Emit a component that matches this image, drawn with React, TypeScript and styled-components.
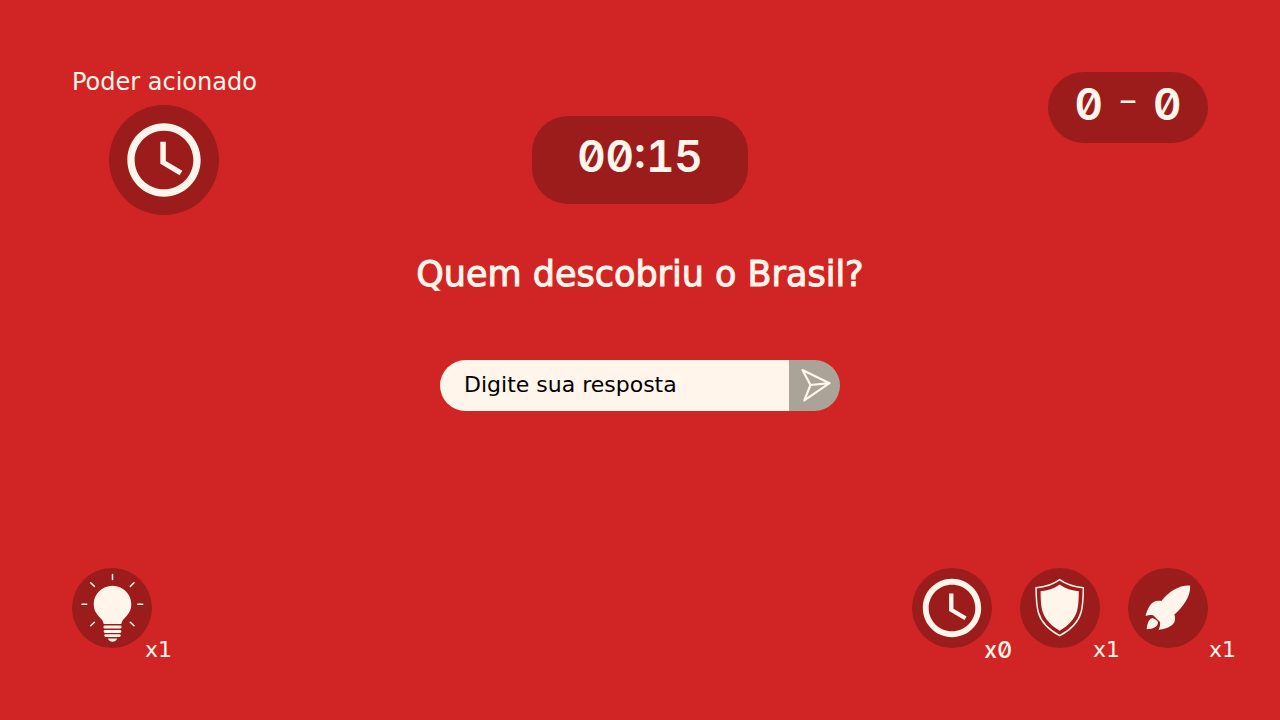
import React, { useState } from "react";
import styled, { createGlobalStyle } from "styled-components";

const colors = {
  red: "#d12525",
  dark: "#9c1c1c",
  cream: "#fff5ea",
  gray: "#a9a398",
};

const GlobalStyle = createGlobalStyle`
  * { box-sizing: border-box; }
  body {
    margin: 0;
    background: ${colors.red};
    color: ${colors.cream};
    font-family: "DejaVu Sans", sans-serif;
  }
`;

const Page = styled.div`
  min-height: 100vh;
  padding: 72px;
  display: flex;
  flex-direction: column;
`;

const Header = styled.header`
  display: grid;
  grid-template-columns: 1fr auto 1fr;
  align-items: start;
`;

const ActivePower = styled.section`
  justify-self: start;
  display: flex;
  flex-direction: column;
  align-items: center;
  gap: 12px;
`;

const ActiveTitle = styled.h2`
  margin: 0;
  font-size: 24px;
  line-height: 21px;
  font-weight: 400;
`;

const ActiveDisc = styled.div`
  width: 110px;
  height: 110px;
  border-radius: 50%;
  background: ${colors.dark};
  display: grid;
  place-items: center;
`;

const Panel = styled.div`
  background: ${colors.dark};
  font-family: Inter, sans-serif;
  font-size: 44px;
  font-weight: 600;
  font-variant-numeric: slashed-zero tabular-nums;
  line-height: 48px;
  border-radius: 36px;
  display: flex;
  justify-content: center;
`;

const Timer = styled(Panel)`
  margin-top: 44px;
  width: 216px;
  padding: 16px 0 24px;
`;

const Score = styled(Panel)`
  justify-self: end;
  width: 160px;
  padding: 8px 0 15px;
  gap: 16px;
`;

const Dash = styled.span`
  font: 400 36px/40px "DejaVu Sans", sans-serif;
`;

const Main = styled.main`
  display: flex;
  flex-direction: column;
  align-items: center;
`;

const Question = styled.h1`
  margin: 38px 0 65px;
  font-size: 35px;
  line-height: 42px;
  font-weight: 400;
  text-align: center;
  -webkit-text-stroke: 1px ${colors.cream};
`;

const AnswerForm = styled.form`
  width: 100%;
  max-width: 400px;
  height: 51px;
  display: flex;
  border-radius: 26px;
  overflow: hidden;
`;

const AnswerInput = styled.input`
  flex: 1;
  min-width: 0;
  border: 0;
  outline: 0;
  padding: 0 24px 3px;
  background: ${colors.cream};
  color: #000;
  font: 400 22px "DejaVu Sans", sans-serif;
  &::placeholder {
    color: #000;
    opacity: 1;
  }
`;

const SendButton = styled.button`
  width: 51px;
  border: 0;
  padding: 0;
  background: ${colors.gray};
  cursor: pointer;
  svg { display: block; }
`;

const Footer = styled.footer`
  margin-top: auto;
  display: flex;
  justify-content: space-between;
`;

const PowerGroup = styled.div`
  display: flex;
  gap: 28px;
`;

const PowerButton = styled.button`
  position: relative;
  width: 80px;
  height: 80px;
  padding: 0;
  border: 0;
  border-radius: 50%;
  background: ${colors.dark};
  color: ${colors.cream};
  display: grid;
  place-items: center;
  cursor: pointer;
  svg { display: block; }
`;

const Count = styled.span<{ $outer?: boolean }>`
  position: absolute;
  right: ${(p) => (p.$outer ? "-28px" : "-20px")};
  bottom: -14px;
  font: 400 22px/24px "DejaVu Sans", sans-serif;
`;

const EmptyCount = styled(Count)`
  font: 500 23px/24px Inter, sans-serif;
  font-variant-numeric: slashed-zero;
`;

const ClockIcon = ({ size }: { size: number }) => (
  <svg width={size} height={size} viewBox="0 0 24 24" fill={colors.cream} aria-hidden="true">
    <path d="M11.99 2C6.47 2 2 6.48 2 12s4.47 10 9.99 10C17.52 22 22 17.52 22 12S17.52 2 11.99 2zM12 20c-4.42 0-8-3.58-8-8s3.58-8 8-8 8 3.58 8 8-3.58 8-8 8z" />
    <path d="M12.5 7H11v6l5.25 3.15.75-1.23-4.5-2.67z" />
  </svg>
);

const BulbIcon = () => (
  <svg width="80" height="80" viewBox="0 0 80 80" fill={colors.cream} aria-hidden="true">
    <path d="M40.5 17.7C30 17.7 21.7 26 21.7 36.3c0 5 1.8 8.5 4.5 11.4 3 3.200 5 4.800 5.500 8.200h17.600c.5-3.400 2.500-5 5.500-8.200 2.700-2.900 4.500-6.400 4.500-11.400C59.300 26 51 17.700 40.500 17.700z" />
    <rect x="31.500" y="57.400" width="18" height="3.200" rx="1.300" />
    <rect x="31.700" y="62" width="17.600" height="2.900" rx="1.300" />
    <rect x="32.300" y="66.200" width="16.400" height="2.700" rx="1.300" />
    <path d="M35.800 70.400h9.400c-1 2.200-2.600 3.300-4.700 3.300s-3.700-1.100-4.700-3.300z" />
    <path
      d="M40.500 6.500v5M10 36.300h4.700M65.800 36.300h4.900M18.700 14.700l3.700 3.700M62 14.700l-3.700 3.700M18.700 57.700l3.700-3.500M62 57.700l-3.700-3.500"
      stroke={colors.cream}
      strokeWidth="1.500"
      strokeLinecap="round"
    />
  </svg>
);

const ShieldIcon = () => (
  <svg width="80" height="80" viewBox="0 0 80 80" aria-hidden="true">
    <path
      d="M39.700 11.600c-6.500 4.800-14.500 7.400-23.600 8.100 0 10 .4 17.800 2.200 24.500 2.900 10.300 11 17.800 21.400 23.500 10.400-5.700 18.500-13.200 21.400-23.500 1.800-6.700 2.200-14.500 2.200-24.500-9.100-.7-17.100-3.300-23.600-8.100z"
      fill="none"
      stroke={colors.cream}
      strokeWidth="1.500"
    />
    <path
      d="M39.700 16.500c-5.500 4-12.300 6.300-19.100 6.800 0 8.700.4 14.200 1.700 19.500 2.400 8.500 9 15 17.400 20 8.400-5 15-11.500 17.400-20 1.300-5.300 1.700-10.800 1.700-19.500-6.800-.5-13.600-2.800-19.100-6.800z"
      fill={colors.cream}
    />
  </svg>
);

const RocketIcon = () => (
  <svg width="80" height="80" viewBox="0 0 80 80" fill={colors.cream} aria-hidden="true">
    <path d="M61.300 17.500C51 17.300 40.500 23.500 33.400 33.100c-5-.9-9.100.6-11.500 4.400-2 3.100-3.500 6.600-4.300 10.600 2.900-1.100 5.600-1.300 7.900-.5l6.500 6.400c.4 2.400-.1 5-1.400 7.800 4.800-.4 8.800-1.600 12-3.700 4.500-2.900 5.300-6.900 3.800-11.700C55.500 38.500 62.300 28.500 62.200 18.400c0-.6-.3-.9-.9-.9z" />
    <path d="M24.700 50.100c-3.800.9-5.300 4.600-6 11.100 6.500-.4 10.300-1.900 11.200-5.700.4-1.500-.4-2.700-1.700-3.600z" />
  </svg>
);

const SendIcon = () => (
  <svg
    width="51"
    height="51"
    viewBox="0 0 51 51"
    fill="none"
    stroke={colors.cream}
    strokeWidth="2.200"
    strokeLinejoin="round"
    strokeLinecap="round"
    aria-hidden="true"
  >
    <path d="M13.500 10L40.500 23.200L15.300 40.300L21.500 25L13.500 10zM21.500 25L40.500 23.200" />
  </svg>
);

export default function App() {
  const [answer, setAnswer] = useState("");

  return (
    <>
      <GlobalStyle />
      <Page>
        <Header>
          <ActivePower>
            <ActiveTitle>Poder acionado</ActiveTitle>
            <ActiveDisc>
              <ClockIcon size={88} />
            </ActiveDisc>
          </ActivePower>
          <Timer role="timer">00:15</Timer>
          <Score>
            <span>0</span>
            <Dash>–</Dash>
            <span>0</span>
          </Score>
        </Header>
        <Main>
          <Question>Quem descobriu o Brasil?</Question>
          <AnswerForm onSubmit={(e) => e.preventDefault()}>
            <AnswerInput
              aria-label="Digite sua resposta"
              placeholder="Digite sua resposta"
              value={answer}
              onChange={(e) => setAnswer(e.target.value)}
            />
            <SendButton type="submit" aria-label="Enviar">
              <SendIcon />
            </SendButton>
          </AnswerForm>
        </Main>
        <Footer>
          <PowerButton type="button" aria-label="Dica x1">
            <BulbIcon />
            <Count>x1</Count>
          </PowerButton>
          <PowerGroup>
            <PowerButton type="button" aria-label="Tempo x0">
              <ClockIcon size={70} />
              <EmptyCount>x0</EmptyCount>
            </PowerButton>
            <PowerButton type="button" aria-label="Escudo x1">
              <ShieldIcon />
              <Count>x1</Count>
            </PowerButton>
            <PowerButton type="button" aria-label="Foguete x1">
              <RocketIcon />
              <Count $outer>x1</Count>
            </PowerButton>
          </PowerGroup>
        </Footer>
      </Page>
    </>
  );
}
